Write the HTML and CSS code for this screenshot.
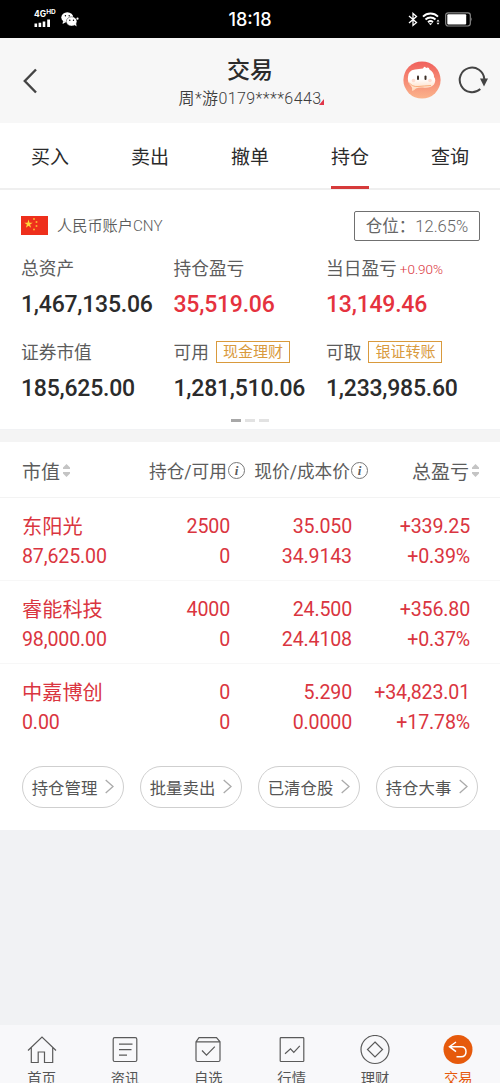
FILE: index.html
```html
<!DOCTYPE html>
<html lang="zh-CN">
<head>
  <meta charset="UTF-8" />
  <meta name="viewport" content="width=device-width, initial-scale=1.0" />
  <title>交易</title>
  <link rel="stylesheet" href="styles.css">
</head>
<body>
  <div class="status-bar">
    <div class="status-left">
      <div class="signal">
        <div class="signal-text">4G<span>HD</span></div>
        <svg width="18" height="8" viewBox="0 0 18 8" fill="#fff">
          <path d="M.5 4.5h2.6V8H.5zM4.6 3.7h2.6V8H4.6zM8.7 2.5h2.6V8H8.7zM13.2.4h2.8V8h-2.8z"/>
        </svg>
      </div>
      <svg class="wechat" width="18" height="15" viewBox="0 0 18 15">
        <ellipse cx="6.3" cy="5.4" rx="6" ry="5.2" fill="#fff"/>
        <path d="M2 9l-.4 3 3-1.8z" fill="#fff"/>
        <ellipse cx="10.6" cy="9.4" rx="5.3" ry="4.6" fill="#fff" stroke="#000" stroke-width=".4"/>
        <path d="M13 12.6l2.6 1.9-.5-3z" fill="#fff"/>
        <circle cx="4.4" cy="3.8" r=".7"/><circle cx="8.2" cy="3.8" r=".7"/>
        <circle cx="8.8" cy="8.2" r=".7"/><circle cx="12.5" cy="8.2" r=".7"/>
        <circle cx="16.5" cy="6.7" r="1.1" fill="#fff"/>
      </svg>
    </div>
    <div class="clock">18:18</div>
    <div class="status-right">
      <svg width="10" height="15" viewBox="0 0 10 15" fill="none" stroke="#fff" stroke-width="1.3">
        <path d="M1 4l7.500 6.500L5 13.400V1.500l3.500 3L1 11"/>
      </svg>
      <svg width="19" height="14" viewBox="0 0 19 14" fill="none" stroke="#fff" stroke-width="1.9">
        <path d="M1 4.600a10.600 10.600 0 0 1 15 0M3.500 7.500a7.200 7.200 0 0 1 10 0M6 10.200a3.800 3.800 0 0 1 5 0"/>
        <path d="M6.600 11.300h3.800l-1.900 2z" fill="#fff" stroke="none"/>
        <path d="M14.500 9.500L16 7.600l1.500 1.900zM14.500 10.800h3L16 12.700z" fill="#fff" stroke="none"/>
      </svg>
      <svg width="28" height="15" viewBox="0 0 28 15">
        <rect x=".7" y=".8" width="24.600" height="13.200" rx="2.400" fill="none" stroke="#888" stroke-width="1.200"/>
        <rect x="2.300" y="2.300" width="18.900" height="10.200" rx="1" fill="#fff"/>
        <path d="M26.200 5.300q1.800 2.200 0 4.400z" fill="#888"/>
      </svg>
    </div>
  </div>

  <header class="header">
    <svg class="back" width="14" height="26" viewBox="0 0 14 26" fill="none" stroke="#444" stroke-width="2.4">
      <path d="M13 1.500L1.800 13 13 24.500"/>
    </svg>
    <div class="header-title">
      <h1>交易</h1>
      <div class="account">周*游0179****6443<svg width="5" height="6" viewBox="0 0 5 6"><path d="M5 0v6H0z" fill="#e0364a"/></svg></div>
    </div>
    <div class="header-actions">
      <svg width="38" height="38" viewBox="0 0 38 38">
        <defs>
          <linearGradient id="faceBg" x1="0" y1="0" x2="0" y2="1">
            <stop offset="0" stop-color="#f0605c"/>
            <stop offset="1" stop-color="#fbb48c"/>
          </linearGradient>
          <linearGradient id="faceFg" x1="0" y1="0" x2="0" y2="1">
            <stop offset=".5" stop-color="#fff"/>
            <stop offset="1" stop-color="#ffd5b5"/>
          </linearGradient>
        </defs>
        <circle cx="19" cy="19" r="18.600" fill="url(#faceBg)"/>
        <path d="M5 16Q5 9.500 12 8.500Q16 8 20 7.500Q21.500 4.500 23 7Q26 5.500 26.500 8.500Q31 11 31 16Q33.500 19 31 23.500Q27 27.500 20 26.500Q16 26 13 27.500Q11 29.500 9 30Q10 27 8 25Q4 21 5 16Z" fill="url(#faceFg)"/>
        <path d="M6 21.500q3 4.500 9 4t13-1" fill="none" stroke="#f9ad7c" stroke-width="1"/>
        <rect x="14" y="14.500" width="2" height="4.500" rx="1" fill="#3d3028"/>
        <rect x="21.500" y="14.500" width="2" height="4.500" rx="1" fill="#3d3028"/>
        <circle cx="10.500" cy="19.500" r="1.800" fill="#ffdcd0"/><circle cx="27" cy="19.500" r="1.800" fill="#ffdcd0"/>
      </svg>
      <svg width="30" height="28" viewBox="0 0 30 28">
        <path d="M22.300 23A12.300 12.300 0 1 1 26.300 13" fill="none" stroke="#444" stroke-width="2"/>
        <path d="M22 12.500h8L26 20.500z" fill="#444"/>
      </svg>
    </div>
  </header>

  <nav class="tabs">
    <a>买入</a>
    <a>卖出</a>
    <a>撤单</a>
    <a class="active">持仓</a>
    <a>查询</a>
  </nav>

  <section class="assets">
    <div class="assets-head">
      <svg width="27" height="19" viewBox="0 0 27 19">
        <rect width="27" height="19" fill="#ee2f1c"/>
        <path d="M7.500 3.500l1 3.200h3.200L9.100 8.500l1 3.200-2.600-2-2.600 2 1-3.200L3.300 6.700h3.200z" fill="#ffd83a"/>
        <g fill="#f9b52f"><circle cx="13" cy="3" r="1"/><circle cx="15.500" cy="6" r="1"/><circle cx="15.500" cy="10" r="1"/><circle cx="13" cy="13.500" r="1"/></g>
      </svg>
      <span class="currency">人民币账户CNY</span>
      <span class="position">仓位：<b>12.65%</b></span>
    </div>
    <div class="asset-grid">
      <div class="asset">
        <div class="label">总资产</div>
        <div class="value">1,467,135.06</div>
      </div>
      <div class="asset">
        <div class="label">持仓盈亏</div>
        <div class="value up">35,519.06</div>
      </div>
      <div class="asset">
        <div class="label">当日盈亏<small>+0.90%</small></div>
        <div class="value up">13,149.46</div>
      </div>
      <div class="asset">
        <div class="label">证券市值</div>
        <div class="value">185,625.00</div>
      </div>
      <div class="asset">
        <div class="label">可用<span class="tag">现金理财</span></div>
        <div class="value">1,281,510.06</div>
      </div>
      <div class="asset">
        <div class="label">可取<span class="tag">银证转账</span></div>
        <div class="value">1,233,985.60</div>
      </div>
    </div>
    <div class="pager"><i class="on"></i><i></i><i></i></div>
  </section>

  <section class="holdings">
    <div class="holdings-head">
      <div class="big">市值<svg class="sort" width="7" height="13" viewBox="0 0 7 13"><path d="M3.500 0L7 3.500V5H0V3.500zM3.500 13L7 9.500V8H0v1.500z"/></svg></div>
      <div>持仓/可用<span class="info">i</span></div>
      <div>现价/成本价<span class="info">i</span></div>
      <div class="big">总盈亏<svg class="sort" width="7" height="13" viewBox="0 0 7 13"><path d="M3.500 0L7 3.500V5H0V3.500zM3.500 13L7 9.500V8H0v1.500z"/></svg></div>
    </div>
    <div class="row">
      <div><p class="name">东阳光</p><p>87,625.00</p></div>
      <div><p>2500</p><p>0</p></div>
      <div><p>35.050</p><p>34.9143</p></div>
      <div><p>+339.25</p><p>+0.39%</p></div>
    </div>
    <div class="row">
      <div><p class="name">睿能科技</p><p>98,000.00</p></div>
      <div><p>4000</p><p>0</p></div>
      <div><p>24.500</p><p>24.4108</p></div>
      <div><p>+356.80</p><p>+0.37%</p></div>
    </div>
    <div class="row">
      <div><p class="name">中嘉博创</p><p>0.00</p></div>
      <div><p>0</p><p>0</p></div>
      <div><p>5.290</p><p>0.0000</p></div>
      <div><p>+34,823.01</p><p>+17.78%</p></div>
    </div>
    <div class="actions">
      <a>持仓管理<svg width="9" height="15" viewBox="0 0 9 15"><path d="M.7 1l7.300 6.500L.7 14"/></svg></a>
      <a>批量卖出<svg width="9" height="15" viewBox="0 0 9 15"><path d="M.7 1l7.300 6.500L.7 14"/></svg></a>
      <a>已清仓股<svg width="9" height="15" viewBox="0 0 9 15"><path d="M.7 1l7.300 6.500L.7 14"/></svg></a>
      <a>持仓大事<svg width="9" height="15" viewBox="0 0 9 15"><path d="M.7 1l7.300 6.500L.7 14"/></svg></a>
    </div>
  </section>

  <footer class="bottom-nav">
    <a>
      <svg width="30" height="30" viewBox="0 0 30 30"><path d="M1 15.500L15 2l14 13.500M4.300 12.700V27.500h6.900V17h6.300v10.500h8.200V12.700"/></svg>
      首页
    </a>
    <a>
      <svg width="30" height="30" viewBox="0 0 30 30"><rect x="3.200" y="2.700" width="23.600" height="23.800" rx="1.500"/><path d="M9 9.200h13.500M9 14.700h12.500M9 20.200h8"/></svg>
      资讯
    </a>
    <a>
      <svg width="30" height="30" viewBox="0 0 30 30"><path d="M3 6.800L6 2.700h17.500l3.500 4.100V25q0 1.500-1.500 1.500h-21Q3 26.500 3 25zM3 6.800h24M9 15.500l4.500 4.700 8.300-8.500"/></svg>
      自选
    </a>
    <a>
      <svg width="30" height="30" viewBox="0 0 30 30"><rect x="3.200" y="2.700" width="23.600" height="23.800" rx=".8"/><path d="M8 18.800l5.500-5 3.300 3.500 6-6.500"/></svg>
      行情
    </a>
    <a>
      <svg width="30" height="30" viewBox="0 0 30 30"><circle cx="15" cy="14.500" r="14"/><path d="M15 7l7.500 7.500L15 22l-7.500-7.500z"/></svg>
      理财
    </a>
    <a class="active">
      <svg width="30" height="30" viewBox="0 0 30 30"><circle cx="15" cy="14.500" r="14.500"/><path d="M13 7l-6.500 4.700 6.500 5M6.500 11.700H18q5 0 5 5t-5 5h-4.500"/></svg>
      交易
    </a>
  </footer>
</body>
</html>
```
FILE: styles.css
```css
:root {
  --red: #da3540;
  --text: #2b2b2b;
  --sub: #5c5c5c;
  --gold: #d99a3d;
}

* {
  box-sizing: border-box;
}

body {
  margin: 0;
  height: 1083px;
  overflow: hidden;
  display: flex;
  flex-direction: column;
  font-family: Roboto, "Noto Sans CJK SC", sans-serif;
  background: #f1f2f4;
  color: var(--text);
}

h1, p {
  margin: 0;
  font-weight: normal;
}

svg {
  display: block;
  flex: none;
}

/* status bar */
.status-bar {
  height: 38px;
  flex: none;
  display: grid;
  grid-template-columns: 1fr auto 1fr;
  align-items: center;
  padding: 0 27px 0 34px;
  background: #000;
  color: #fff;
}

.status-left, .status-right {
  display: flex;
  align-items: center;
}

.signal {
  margin-top: -2px;
}

.signal-text {
  display: flex;
  height: 8px;
  margin-bottom: 1px;
  font: bold 8.5px/8px Inter, sans-serif;
}

.signal-text span {
  font-size: 6.5px;
  line-height: 5px;
}

.wechat {
  margin-left: 5px;
}

.clock {
  margin-right: 7px;
  font: 500 18px/22px Inter, sans-serif;
  padding-top: 2px;
}

.status-right {
  justify-content: flex-end;
  gap: 4px;
}

/* title */
.header {
  height: 85px;
  flex: none;
  display: grid;
  grid-template-columns: 100px 1fr 100px;
  align-items: center;
  background: #f7f7f7;
}

.back {
  margin-left: 23px;
}

.header-title {
  text-align: center;
  padding-top: 7px;
}

.header h1 {
  font-size: 23px;
  font-weight: 500;
  line-height: 30px;
}

.account {
  display: flex;
  justify-content: center;
  align-items: center;
  font-size: 16px;
  font-weight: 350;
  letter-spacing: 0.4px;
  line-height: 26px;
  color: #3c3c3c;
  padding-left: 3px;
}

.account svg {
  margin-top: 5px;
  margin-left: -2px;
}

.header-actions {
  display: flex;
  align-items: center;
  gap: 17px;
  margin-left: 3px;
  margin-top: -1px;
}

/* tabs */
.tabs {
  height: 67px;
  flex: none;
  display: flex;
  background: #fff;
  border-bottom: 2px solid #efefef;
}

.tabs a {
  flex: 1;
  display: flex;
  flex-direction: column;
  align-items: center;
  padding-top: 2px;
  font-size: 19px;
  line-height: 66px;
  height: 66px;
}

.tabs .active::after {
  content: "";
  width: 38px;
  height: 3px;
  margin-top: -5px;
  background: #d63a3a;
}

/* assets */
.assets {
  height: 239px;
  flex: none;
  margin-bottom: 1px;
  padding: 20px 20px 0 21px;
  background: #fff;
}

.assets + .holdings {
  border-top: 12px solid #f4f4f4;
}

.assets-head {
  height: 31px;
  display: flex;
  align-items: center;
}

.currency {
  margin-left: 9px;
  padding-bottom: 3px;
  font-size: 15.2px;
  font-weight: 350;
  color: var(--sub);
}

.position {
  display: flex;
  justify-content: center;
  width: 126px;
  height: 30px;
  margin-left: auto;
  border: 1px solid #707070;
  border-radius: 2px;
  font-size: 16.5px;
  line-height: 29px;
  color: #666;
}

.position b {
  font-weight: 300;
}

.asset-grid {
  display: grid;
  grid-template-columns: 152.5px 152.5px 1fr;
  margin-top: 11px;
}

.asset {
  height: 84px;
}

.label {
  display: flex;
  align-items: center;
  height: 32px;
  padding-bottom: 2px;
  font-size: 17.7px;
  color: var(--sub);
}

.label small {
  margin-left: 3px;
  padding-top: 3px;
  font-size: 13.5px;
  font-weight: 350;
  color: var(--red);
}

.value {
  font-size: 23px;
  font-weight: 500;
  line-height: 41px;
  letter-spacing: -0.22px;
}

.up {
  color: #e5323e;
}

.tag {
  width: 74px;
  height: 22px;
  margin-left: 7px;
  margin-top: 1px;
  border: 1px solid var(--gold);
  font-size: 15px;
  line-height: 20px;
  text-align: center;
  color: var(--gold);
}

.pager {
  display: flex;
  justify-content: center;
  gap: 4px;
  margin: -1px 2px 0 0;
}

.pager i {
  width: 10px;
  height: 3px;
  background: #e2e2e2;
}

.pager .on {
  background: #a8a8a8;
}

/* holdings */
.holdings {
  height: 400px;
  flex: none;
  background: #fff;
}

.holdings-head {
  height: 56px;
  display: grid;
  grid-template-columns: 100px 123px 123px 111px;
  align-items: center;
  padding: 1px 0 0 22px;
  border-bottom: 1px solid #f3f3f3;
  font-size: 17.7px;
  white-space: nowrap;
  color: var(--sub);
}

.holdings-head > div {
  display: flex;
  align-items: center;
  justify-content: flex-end;
}

.holdings-head > div:first-child {
  justify-content: flex-start;
}

.holdings-head .big {
  font-size: 19px;
}

.sort {
  margin-left: 3px;
  fill: #c4c4c4;
}

.info {
  width: 17px;
  height: 17px;
  margin-left: 1px;
  border: 1px solid #777;
  border-radius: 50%;
  font: italic bold 13px/15px "Liberation Serif", serif;
  text-align: center;
}

.row {
  height: 83px;
  display: grid;
  grid-template-columns: 107px 101px 122px 118px;
  padding: 14px 0 0 22px;
  border-bottom: 1px solid #f7f7f7;
  font-size: 19.6px;
  font-weight: 350;
  letter-spacing: -0.15px;
  line-height: 30px;
  text-align: right;
  white-space: nowrap;
  color: var(--red);
}

.row > div:first-child {
  text-align: left;
}

.row p {
  height: 30px;
}

.row .name {
  font-size: 20.2px;
  letter-spacing: 0;
}

.row:nth-last-child(2) {
  border-bottom: none;
}

.actions {
  display: flex;
  gap: 16px;
  padding: 19px 22px 0;
}

.actions a {
  display: flex;
  align-items: center;
  justify-content: center;
  gap: 8px;
  width: 102px;
  height: 42px;
  padding-bottom: 1px;
  border: 1px solid #cfcfcf;
  border-radius: 21px;
  font-size: 16.4px;
  color: #555;
}

.actions svg {
  fill: none;
  stroke: #aaa;
  stroke-width: 1.3;
}

/* bottom nav */
.bottom-nav {
  height: 58px;
  flex: none;
  margin-top: auto;
  display: flex;
  padding-top: 10px;
  background: #f8f8fa;
}

.bottom-nav a {
  flex: 1;
  display: flex;
  flex-direction: column;
  align-items: center;
  font-size: 14.3px;
  line-height: 28px;
  color: #555;
}

.bottom-nav svg {
  fill: none;
  stroke: #5a5a5a;
  stroke-width: 1.2;
}

.bottom-nav .active {
  color: #e65a0c;
}

.bottom-nav .active circle {
  fill: #e65a0c;
  stroke: none;
}

.bottom-nav .active path {
  stroke: #fff;
  stroke-width: 1.5;
}
```
